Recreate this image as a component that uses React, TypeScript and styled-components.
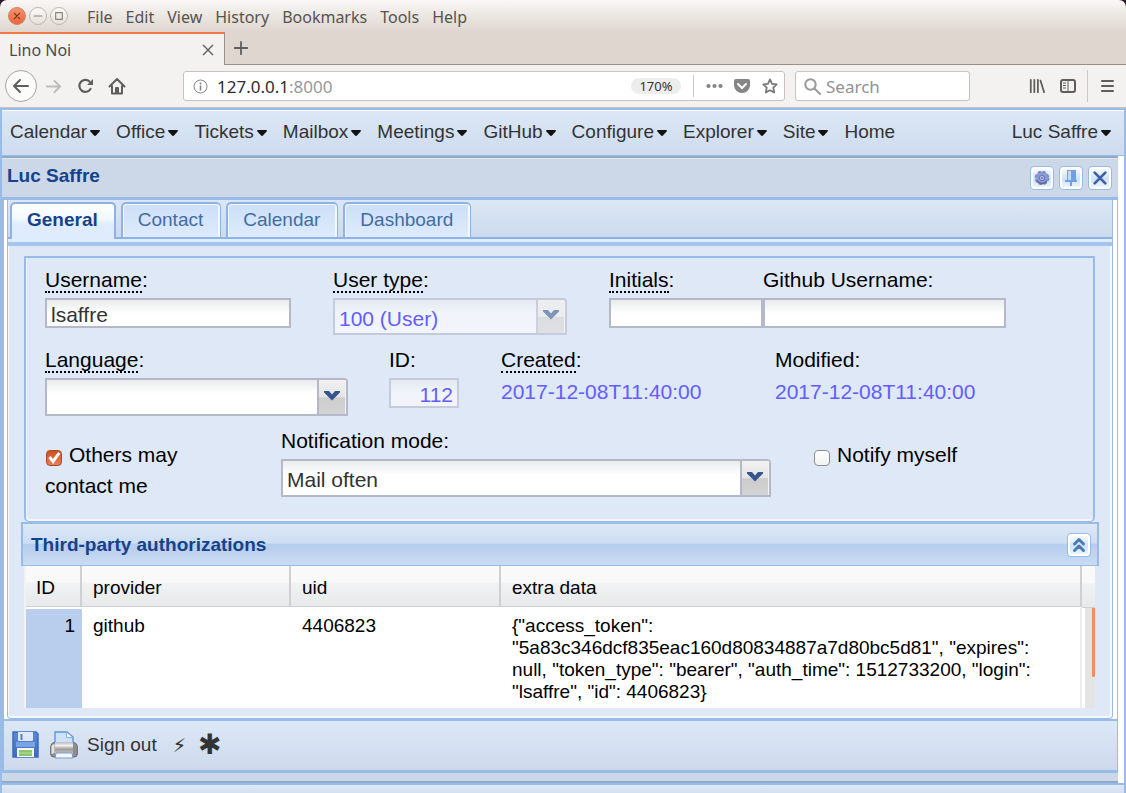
import React from "react";
import styled, { createGlobalStyle, css } from "styled-components";

const Global = createGlobalStyle`
  * { box-sizing: border-box; }
  html, body, #root { min-height: 100vh; }
  body { margin: 0; background: #fff; }
  #root { display: flex; flex-direction: column; }
  button, input, select { font: inherit; color: inherit; margin: 0; }
  button { background: none; border: 0; padding: 0; cursor: pointer; }
  svg { display: block; }
`;

const chromeFont = `"Noto Sans", "Open Sans", sans-serif`;
const appFont = `"Liberation Sans", Arial, sans-serif`;
const line = "#99bbe8";
const edge = "#b5b8c8";

/* ---------- browser window ---------- */

const Window = styled.div`
  flex: 1;
  display: flex;
  flex-direction: column;
  background: #2c1a2b;
`;

const TitleBar = styled.header`
  height: 32px;
  display: flex;
  align-items: center;
  padding: 0 8px;
  border-radius: 7px 7px 0 0;
  background: linear-gradient(#f9f7f5, #ded6cf);
  font: 16px ${chromeFont};
  color: #57534e;
`;

const WindowButtons = styled.div`
  display: flex;
  gap: 3px;
  margin-right: 19px;
`;

const WindowButton = styled.button<{ $close?: boolean }>`
  width: 18px;
  height: 18px;
  border-radius: 50%;
  display: grid;
  place-items: center;
  border: 1px solid ${(p) => (p.$close ? "#c98468" : "#bfb8b1")};
  background: ${(p) => (p.$close ? "linear-gradient(#f79272, #ec6537)" : "linear-gradient(#fbfaf9, #e6e0da)")};
`;

const MenuList = styled.nav`
  display: flex;
  gap: 13px;
  padding-top: 2px;
`;

const TabStrip = styled.div`
  height: 33px;
  display: flex;
  background: #dfd6d0;
`;

const BrowserTab = styled.div`
  width: 225px;
  display: flex;
  align-items: center;
  justify-content: space-between;
  padding: 0 10px 0 9px;
  border-top: 2px solid #f07746;
  border-right: 1px solid #98918b;
  background: #f4f2f1;
  font: 16px ${chromeFont};
  color: #4a4a4c;
`;

const TabRest = styled.div`
  flex: 1;
  display: flex;
  align-items: center;
  padding-left: 8px;
  border-bottom: 1px solid #98918b;
`;

const NavBar = styled.div`
  height: 43px;
  display: flex;
  align-items: center;
  padding: 0 12px 0 5px;
  background: #f4f2f1;
  border-bottom: 1px solid #c9c3be;
  font: 17px ${chromeFont};
`;

const BackButton = styled.button`
  width: 32px;
  height: 32px;
  border: 1px solid #a9a6a3;
  border-radius: 50%;
  background: #fcfcfb;
  display: grid;
  place-items: center;
`;

const NavIcon = styled.button<{ $gap: number }>`
  display: grid;
  place-items: center;
  margin-left: ${(p) => p.$gap}px;
`;

const AddressBox = styled.div`
  flex: 1;
  height: 30px;
  margin-left: 57px;
  padding: 0 6px 0 9px;
  display: flex;
  align-items: center;
  border: 1px solid #c5c2bf;
  border-radius: 3px;
  background: #fff;
`;

const Address = styled.div`
  flex: 1;
  padding-left: 9px;
  color: #2c2c2e;
  span { color: #98989a; }
`;

const Zoom = styled.button`
  height: 16px;
  width: 50px;
  border-radius: 8px;
  background: #ededed;
  font-size: 13px;
  line-height: 16px;
  color: #333;
  margin-right: 12px;
`;

const Divider = styled.span<{ $tall?: boolean }>`
  width: 1px;
  height: ${(p) => (p.$tall ? 32 : 22)}px;
  background: #cbc8c5;
`;

const SearchBox = styled.label`
  width: 175px;
  height: 30px;
  margin: 0 59px 0 10px;
  padding: 0 8px;
  display: flex;
  align-items: center;
  gap: 5px;
  border: 1px solid #c5c2bf;
  border-radius: 3px;
  background: #fff;
  svg { flex: none; }
  input {
    width: 100%;
    border: 0;
    padding: 0;
    outline: 0;
    background: none;
    &::placeholder { color: #929294; opacity: 1; }
  }
`;

/* ---------- application shell ---------- */

const Viewport = styled.div`
  flex: 1;
  display: flex;
  flex-direction: column;
  border: solid ${line};
  border-width: 2px 2px 0;
  background: #fff;
  font: 19px/22px ${appFont};
  color: #333;
`;

const AppMenu = styled.nav`
  height: 46px;
  display: flex;
  align-items: center;
  gap: 16px;
  padding: 0 13px 2px 8px;
  border-top: 1px solid #fff;
  border-bottom: 1px solid ${line};
  background: linear-gradient(#dbe7f5, #cedcee);
`;

const AppMenuItem = styled.button<{ $last?: boolean }>`
  display: flex;
  align-items: center;
  gap: 3px;
  white-space: nowrap;
  margin-left: ${(p) => (p.$last ? "auto" : "0")};
  svg { margin-top: 2px; }
`;

const Main = styled.main`
  flex: 1;
  margin-right: 6px;
  display: flex;
  flex-direction: column;
  border-top: 2px solid #93a9c8;
  background: #ccd7e7;
`;

const PanelHeader = styled.header`
  height: 40px;
  display: flex;
  align-items: center;
  gap: 5px;
  padding: 0 6px 0 5px;
  border-top: 1px solid #dfe6ee;
  border-bottom: 1px solid ${line};
`;

const PanelTitle = styled.h1`
  flex: 1;
  margin: 0 0 5px;
  font-size: 19px;
  line-height: 22px;
  color: #15428b;
`;

const Tool = styled.button`
  width: 24px;
  height: 24px;
  display: grid;
  place-items: center;
  border: 1px solid ${line};
  border-radius: 4px;
  background: linear-gradient(#fff, #cfe2fa 55%, #f2f9ff);
  box-shadow: inset 0 0 0 2px #fff;
`;

const PanelFrame = styled.section`
  flex: 1;
  display: flex;
  flex-direction: column;
  border: 2px solid ${line};
  border-width: 2px 1px 0 2px;
  background: #fff;
`;

const TabPanelBox = styled.div`
  flex: 1;
  margin: 0 4px 0 3px;
  display: flex;
  flex-direction: column;
  border: 1px solid ${line};
  border-top: 0;
  border-radius: 0 0 4px 4px;
  background: #dfe8f6;
`;

const Tabs = styled.div`
  height: 39px;
  display: flex;
  align-items: flex-end;
  gap: 5px;
  padding-left: 2px;
  border-bottom: 2px solid #8db2e3;
  background: linear-gradient(#dce7f5, #cbdaed);
`;

const Tab = styled.button<{ $active?: boolean }>`
  height: 35px;
  padding: 0 17px 2px 15px;
  border: 1px solid #8db2e3;
  border-width: 2px 1px 0 2px;
  border-radius: 5px 5px 0 0;
  color: #416da3;
  background: linear-gradient(#ccdff8, #deebfd);
  box-shadow: inset 1px 1px 0 #f3f8fe, inset -2px 0 0 #f3f8fe;
  ${(p) =>
    p.$active &&
    css`
      height: 37px;
      margin-bottom: -2px;
      padding-right: 16px;
      padding-bottom: 4px;
      border-right-width: 2px;
      font-weight: bold;
      color: #15428b;
      background: linear-gradient(#fff, #f3f9ff 40%, #deecfd 60%);
      box-shadow: none;
    `}
`;

const TabGap = styled.div`
  height: 7px;
  border-bottom: 4px solid #a6c4ec;
  background: #deecfd;
`;

const TabBody = styled.div`
  flex: 1;
  padding: 10px 11px 8px 12px;
  border: solid #f5f9fe;
  border-width: 0 2px 2px 1px;
  border-radius: 0 0 4px 4px;
`;

/* ---------- form ---------- */

const FormPanel = styled.form`
  height: 266px;
  margin: 0 4px 0 3px;
  padding: 10px 18px 0 19px;
  display: flex;
  flex-direction: column;
  border: 2px solid ${line};
  border-bottom-width: 1px;
  border-radius: 1px 1px 5px 5px;
  box-shadow: inset 1px -2px 0 #f2f6fc;
  font-size: 21px;
  line-height: 24px;
  color: #000;
`;

const FormRow = styled.div<{ $cols: string; $height: number }>`
  display: grid;
  grid-template-columns: ${(p) => p.$cols};
  height: ${(p) => p.$height}px;
`;

const Field = styled.div<{ $after?: number }>`
  min-width: 0;
  padding-right: ${(p) => p.$after ?? 0}px;
`;

const Label = styled.label<{ $hint?: boolean }>`
  display: block;
  height: 30px;
  white-space: nowrap;
  span { ${(p) => p.$hint && "display: inline-block; height: 25px; border-bottom: 2px dotted #000;"} }
`;

const fieldFill = "linear-gradient(#e9eded, #fff 14px)";

const TextInput = styled.input`
  display: block;
  width: 100%;
  height: 30px;
  padding: 4px 4px 0;
  border: 2px solid ${edge};
  border-radius: 0;
  background: ${fieldFill};
  color: #333;
  outline: 0;
  &:read-only {
    width: 70px;
    text-align: right;
    color: #635cff;
    border-color: #c5cbdd;
    background: linear-gradient(#e5eaf1, #f1f5fb 14px);
  }
`;

const Combo = styled.div<{ $short?: boolean }>`
  position: relative;
  height: ${(p) => (p.$short ? 37 : 38)}px;
  select {
    width: 100%;
    height: 100%;
    padding: 4px 34px 0 4px;
    appearance: none;
    border: 2px solid ${edge};
    border-radius: 0 4px 0 0;
    background: ${fieldFill};
    color: #333;
    outline: 0;
    &:disabled {
      opacity: 1;
      color: #635cff;
      border-color: #c5cbdd;
      background: linear-gradient(#e5eaf1, #f1f5fb 14px);
    }
  }
`;

const Trigger = styled.span`
  position: absolute;
  inset: 2px 2px 2px auto;
  width: 29px;
  display: grid;
  place-items: center;
  padding: 0 2px 3px 0;
  border-left: 2px solid ${edge};
  background: linear-gradient(#f1f1f1, #e4e4e4 50%, #cdcdcd 52%, #d3d3d3);
  box-shadow: inset -1px 0 0 #f4f4f4;
  pointer-events: none;
  select:disabled + & { opacity: 0.6; }
`;

const Value = styled.output`
  display: block;
  margin-top: 2px;
  color: #635cff;
`;

const CheckLabel = styled.label`
  display: block;
  width: 170px;
  margin-top: 10px;
  line-height: 31px;
`;

const Check = styled.input`
  appearance: none;
  width: 16px;
  height: 16px;
  margin: 0 7px 0 1px;
  vertical-align: -4px;
  border: 1px solid #8e8e8c;
  border-radius: 4px;
  background: linear-gradient(#fff, #f2f2f2);
  &:checked {
    border-color: #a8492a;
    background: linear-gradient(#cf4f22, #e8805a);
  }
  &:checked::after {
    content: "";
    display: block;
    height: 14px;
    background: #fff;
    clip-path: polygon(10% 50%, 26% 36%, 42% 58%, 80% 8%, 96% 20%, 44% 92%);
  }
`;

/* ---------- grid ---------- */

const GridHeader = styled.header`
  height: 44px;
  display: flex;
  align-items: center;
  justify-content: space-between;
  padding: 0 6px 0 8px;
  border: 2px solid ${line};
  border-bottom-width: 1px;
  background: linear-gradient(#dce8f6, #cddef3 47%, #b4ccec 49%, #cbdcf3);
  h2 { margin: 0; font-size: 19px; line-height: 22px; color: #15428b; }
`;

const GridBox = styled.div`
  height: 142px;
  margin: 0 4px 0 3px;
  display: flex;
  background: #fff;
  color: #000;
`;

const Table = styled.table`
  flex: 1;
  table-layout: fixed;
  border-collapse: separate;
  border-spacing: 0;
  border-left: 2px solid #f2f2f2;
  th, td { padding: 0 8px 0 11px; text-align: left; vertical-align: top; font-weight: normal; }
  th {
    height: 41px;
    vertical-align: middle;
    padding-top: 4px;
    border-right: 2px solid #d0d0d0;
    border-bottom: 1px solid #d0d0d0;
    background: linear-gradient(#f9f9f9 40%, #f1f2f3 44%, #e8e9eb);
  }
  th:first-child { padding-left: 10px; }
  td { height: 101px; padding-top: 6px; border-top: 2px solid #fff; }
  td:first-child { text-align: right; padding-right: 7px; background: #b8ceec; }
  td:last-child { padding-right: 24px; border-right: 2px solid #ededed; }
`;

const ScrollColumn = styled.div`
  width: 13px;
  display: flex;
  flex-direction: column;
  &::before {
    content: "";
    height: 41px;
    border-bottom: 1px solid #d0d0d0;
    background: linear-gradient(#f9f9f9 40%, #f1f2f3 44%, #e8e9eb);
  }
`;

const ScrollTrack = styled.div`
  flex: 1;
  margin-left: 3px;
  background: #e4e4e4;
`;

const ScrollThumb = styled.div`
  height: 69px;
  width: 3px;
  margin-left: auto;
  background: #f08c66;
  border-radius: 0 0 1px 1px;
`;

/* ---------- bottom ---------- */

const BottomBar = styled.div`
  height: 54px;
  display: flex;
  align-items: center;
  padding: 0 8px 2px;
  border-top: 2px solid ${line};
  border-bottom: 3px solid ${line};
  background: linear-gradient(#dce8f6, #cddaec);
`;

const BarButton = styled.button<{ $gap?: number }>`
  display: flex;
  align-items: center;
  margin-left: ${(p) => p.$gap ?? 0}px;
`;

const Symbol = styled.span<{ $size: number }>`
  font: ${(p) => p.$size}px/30px "DejaVu Sans", sans-serif;
  color: #333;
`;

const Splitter = styled.div`
  height: 10px;
  border-bottom: 2px solid #8fa8cc;
  background: #cdd8e6;
`;

const StatusBar = styled.footer`
  height: 10px;
  border-top: 2px solid ${line};
  background: linear-gradient(#dfe9f6, #d3e0f1);
`;

/* ---------- icons ---------- */

const Stroke = ({ d, size = 18, color = "#5f5e5e", w = 2 }: { d: string; size?: number; color?: string; w?: number }) => (
  <svg width={size} height={size} viewBox="0 0 18 18" fill="none" stroke={color} strokeWidth={w} strokeLinecap="round" strokeLinejoin="round">
    <path d={d} />
  </svg>
);

const Caret = () => (
  <svg width="10" height="6" viewBox="0 0 10 6"><path d="M0 1Q0 0 1 0h8q1 0 1 1L6 5.5Q5 6.3 4 5.5Z" fill="#111" /></svg>
);

const Chevron = () => (
  <svg width="16" height="10" viewBox="0 0 16 10"><path d="M0 0h5l3 3.500 3-3.500h5v1.500L8 9.500 0 1.500Z" fill="#36558f" /></svg>
);

const Gear = () => (
  <svg width="16" height="16" viewBox="0 0 18 18">
    <circle cx="9" cy="9" r="7.2" fill="#8493cb" stroke="#7384bd" strokeWidth="2" strokeDasharray="3.4 2.255" />
    <circle cx="9" cy="9" r="6.6" fill="#8d9bd0" />
    <path d="M3.500 12a6.300 6.300 0 0 0 11 0" fill="none" stroke="#5a6a9e" strokeWidth="1.600" />
    <circle cx="9" cy="9" r="2.800" fill="#bcc6ec" stroke="#6676b5" strokeWidth="1.200" />
    <circle cx="9" cy="9" r="1" fill="#6676b5" />
  </svg>
);

const Pin = () => (
  <svg width="18" height="18" viewBox="0 0 18 18">
    <path d="M5 1h9v10h1v2h-5v4H8v-4H3v-2h2Z" fill="#6ea0e2" />
    <path d="M6 2h3v9H6Z" fill="#c4dcfa" />
  </svg>
);

const Floppy = () => (
  <svg width="27" height="27" viewBox="0 0 27 27">
    <defs><linearGradient id="fl" x2="0" y2="1"><stop stopColor="#5a8bd8" /><stop offset="1" stopColor="#3c6cbc" /></linearGradient></defs>
    <path d="M1 1h23l2 2v23H1Z" fill="url(#fl)" stroke="#3c6dbd" strokeWidth="1.500" />
    <path d="M4 11h19v5H4Z" fill="#7ba4e6" />
    <path d="M6 1h15v8q0 1-1 1H7q-1 0-1-1Z" fill="#dfe8f7" />
    <path d="M8.500 3h2v6h-2Z" fill="#5f80b9" />
    <path d="M5 17h17v9H5Z" fill="#f4f8f1" />
    <path d="M7 19h13v6H7Z" fill="#8cc56c" /><path d="M7 22h13" stroke="#b3dc9a" />
  </svg>
);

const Printer = () => (
  <svg width="28" height="28" viewBox="0 0 28 28">
    <defs><linearGradient id="pr" x2="0" y2="1"><stop stopColor="#b9b9bb" /><stop offset=".3" stopColor="#f1f1f1" /><stop offset=".6" stopColor="#9b9b9d" /><stop offset="1" stopColor="#c9c9cb" /></linearGradient></defs>
    <path d="M0.700 16q0-4 4-5h18q4.600 1 4.600 5v7q0 3-3 3H4q-3.300 0-3.300-3Z" fill="#8f8f91" stroke="#69696b" />
    <path d="M5 12V1h12l6 5v6Z" fill="#cde1f9" stroke="#5c96da" strokeWidth="1.400" />
    <path d="M16.500 1.500v5h6" fill="#f3f8fe" stroke="#7fb0e8" />
    <path d="M5 11h18v12H5Z" fill="url(#pr)" />
    <path d="M1.500 15q1-2 3-2v9l-3 1Z" fill="#e4e4e5" />
    <path d="M6 22h16l1 5H5Z" fill="#f2f6fb" stroke="#7c9cc6" />
  </svg>
);

/* ---------- page ---------- */

const browserMenu = ["File", "Edit", "View", "History", "Bookmarks", "Tools", "Help"];
const appMenu = ["Calendar", "Office", "Tickets", "Mailbox", "Meetings", "GitHub", "Configure", "Explorer", "Site"];
const tabs = ["General", "Contact", "Calendar", "Dashboard"];

export default function App() {
  return (
    <Window>
      <Global />
      <TitleBar>
        <WindowButtons>
          <WindowButton $close aria-label="Close window"><Stroke size={10} color="#6b3320" w={2} d="M4 4l10 10M14 4L4 14" /></WindowButton>
          <WindowButton aria-label="Minimize"><Stroke size={10} color="#85807b" w={2} d="M2 9h14" /></WindowButton>
          <WindowButton aria-label="Maximize"><Stroke size={10} color="#85807b" w={2} d="M3 3h12v12H3Z" /></WindowButton>
        </WindowButtons>
        <MenuList>{browserMenu.map((m) => <button key={m}>{m}</button>)}</MenuList>
      </TitleBar>
      <TabStrip>
        <BrowserTab>Lino Noi<button aria-label="Close tab"><Stroke size={12} w={2} d="M2 2l14 14M16 2L2 16" /></button></BrowserTab>
        <TabRest><button aria-label="New tab"><Stroke size={16} w={2} d="M9 2v14M2 9h14" /></button></TabRest>
      </TabStrip>
      <NavBar>
        <BackButton aria-label="Back"><Stroke w={2} d="M16 9H3M8 3L2 9L8 15" /></BackButton>
        <NavIcon $gap={8} aria-label="Forward"><Stroke size={17} color="#bdbbb9" w={2} d="M2 9H15M10 3L16 9L10 15" /></NavIcon>
        <NavIcon $gap={15} aria-label="Reload">
          <svg width="17" height="16" viewBox="0 0 17 16"><path d="M13.500 11a6 6 0 1 1-1-7.500" fill="none" stroke="#5f5e5e" strokeWidth="2.200" strokeLinecap="round" /><path d="M16 1v6h-6Z" fill="#5f5e5e" /></svg>
        </NavIcon>
        <NavIcon $gap={14} aria-label="Home">
          <svg width="18" height="18" viewBox="0 0 18 18" fill="none" stroke="#5f5e5e" strokeWidth="2" strokeLinejoin="round" strokeLinecap="round">
            <path d="M1.500 9.500L9 2l7.500 7.500M4 9v7.500h10V9" /><path d="M8 16v-5h2v5" />
          </svg>
        </NavIcon>
        <AddressBox>
          <svg width="15" height="15" viewBox="0 0 15 15" fill="none" stroke="#858585"><circle cx="7.500" cy="7.500" r="6.500" /><path d="M7.500 6.500v5M7.500 3.500v2" strokeWidth="1.600" /></svg>
          <Address>127.0.0.1<span>:8000</span></Address>
          <Zoom>170%</Zoom>
          <Divider />
          <NavIcon $gap={12} aria-label="Page actions"><svg width="17" height="18" viewBox="0 0 17 18" fill="#858585"><circle cx="2.500" cy="9" r="2.100" /><circle cx="8.500" cy="9" r="2.100" /><circle cx="14.500" cy="9" r="2.100" /></svg></NavIcon>
          <NavIcon $gap={11} aria-label="Save to Pocket">
            <svg width="16" height="16" viewBox="0 0 16 16"><path d="M2 1h12q2 0 2 2v4.500a8 7.500 0 0 1-16 0V3q0-2 2-2Z" fill="#858585" /><path d="M4 6l4 4 4-4" fill="none" stroke="#fff" strokeWidth="2" strokeLinecap="round" /></svg>
          </NavIcon>
          <NavIcon $gap={12} aria-label="Bookmark"><Stroke size={16} color="#777" d="M9 1.500l2.300 5 5.200.7-3.800 3.700 1 5.400L9 13.700l-4.700 2.600 1-5.400L1.500 7.200l5.200-.7Z" /></NavIcon>
        </AddressBox>
        <SearchBox>
          <svg width="17" height="17" viewBox="0 0 17 17" fill="none" stroke="#9a9a9a" strokeWidth="2" strokeLinecap="round"><circle cx="6.500" cy="6.500" r="5.200" /><path d="M10.500 10.500L16 16" /></svg>
          <input placeholder="Search" aria-label="Search" />
        </SearchBox>
        <NavIcon $gap={0} aria-label="Library"><Stroke size={16} d="M2 2v14M6 2v14M10 2v14M13 3L17 16" /></NavIcon>
        <NavIcon $gap={15} aria-label="Sidebar">
          <svg width="16" height="14" viewBox="0 0 16 14" fill="none" stroke="#5f5e5e" strokeWidth="2"><rect x="1" y="1" width="14" height="12" rx="2" /><path d="M8 1v12" strokeWidth="1" /><path d="M3 4h3M3 6.500h3M3 9h3" strokeWidth="1" /></svg>
        </NavIcon>
        <NavIcon as="span" $gap={11}><Divider $tall /></NavIcon>
        <NavIcon $gap={13} aria-label="Menu"><svg width="13" height="14" viewBox="0 0 13 14"><path d="M1 2h11M1 7h11M1 12h11" stroke="#5f5e5e" strokeWidth="2" strokeLinecap="round" /></svg></NavIcon>
      </NavBar>

      <Viewport>
        <AppMenu>
          {appMenu.map((m) => <AppMenuItem key={m}>{m}<Caret /></AppMenuItem>)}
          <AppMenuItem>Home</AppMenuItem>
          <AppMenuItem $last>Luc Saffre<Caret /></AppMenuItem>
        </AppMenu>
        <Main>
          <PanelHeader>
            <PanelTitle>Luc Saffre</PanelTitle>
            <Tool aria-label="Settings"><Gear /></Tool>
            <Tool aria-label="Pin"><Pin /></Tool>
            <Tool aria-label="Close"><Stroke size={16} color="#3f5fa6" w={3} d="M3 3l12 12M15 3L3 15" /></Tool>
          </PanelHeader>
          <PanelFrame>
            <TabPanelBox>
              <Tabs role="tablist">
                {tabs.map((t, i) => <Tab key={t} role="tab" aria-selected={i === 0} $active={i === 0}>{t}</Tab>)}
              </Tabs>
              <TabGap />
              <TabBody>
                <FormPanel onSubmit={(e) => e.preventDefault()}>
                  <FormRow $cols="288fr 276fr 154fr 243fr 69fr" $height={80}>
                    <Field $after={42}>
                      <Label htmlFor="username" $hint><span>Username</span>:</Label>
                      <TextInput id="username" defaultValue="lsaffre" />
                    </Field>
                    <Field $after={42}>
                      <Label htmlFor="usertype" $hint><span>User type</span>:</Label>
                      <Combo $short><select id="usertype" disabled><option>100 (User)</option></select><Trigger><Chevron /></Trigger></Combo>
                    </Field>
                    <Field>
                      <Label htmlFor="initials" $hint><span>Initials</span>:</Label>
                      <TextInput id="initials" />
                    </Field>
                    <Field>
                      <Label htmlFor="github">Github Username:</Label>
                      <TextInput id="github" />
                    </Field>
                  </FormRow>
                  <FormRow $cols="344fr 112fr 274fr 300fr" $height={81}>
                    <Field $after={41}>
                      <Label htmlFor="language" $hint><span>Language</span>:</Label>
                      <Combo><select id="language"><option></option></select><Trigger><Chevron /></Trigger></Combo>
                    </Field>
                    <Field>
                      <Label htmlFor="id">ID:</Label>
                      <TextInput id="id" readOnly value="112" />
                    </Field>
                    <Field>
                      <Label htmlFor="created" $hint><span>Created</span>:</Label>
                      <Value id="created">2017-12-08T11:40:00</Value>
                    </Field>
                    <Field>
                      <Label htmlFor="modified">Modified:</Label>
                      <Value id="modified">2017-12-08T11:40:00</Value>
                    </Field>
                  </FormRow>
                  <FormRow $cols="236fr 532fr 262fr" $height={81}>
                    <Field><CheckLabel><Check type="checkbox" defaultChecked />Others may contact me</CheckLabel></Field>
                    <Field $after={42}>
                      <Label htmlFor="mode">Notification mode:</Label>
                      <Combo><select id="mode"><option>Mail often</option></select><Trigger><Chevron /></Trigger></Combo>
                    </Field>
                    <Field><CheckLabel><Check type="checkbox" />Notify myself</CheckLabel></Field>
                  </FormRow>
                </FormPanel>
                <GridHeader>
                  <h2>Third-party authorizations</h2>
                  <Tool aria-label="Collapse"><Stroke size={18} color="#4c7cb8" w={3} d="M4.500 8l4.500-4.500 4.500 4.500M4.500 14.500l4.500-4.500 4.500 4.500" /></Tool>
                </GridHeader>
                <GridBox>
                  <Table>
                    <colgroup><col style={{ width: 56 }} /><col style={{ width: 209 }} /><col style={{ width: 210 }} /><col /></colgroup>
                    <thead><tr><th>ID</th><th>provider</th><th>uid</th><th>extra data</th></tr></thead>
                    <tbody>
                      <tr>
                        <td>1</td><td>github</td><td>4406823</td>
                        <td>{'{"access_token": "5a83c346dcf835eac160d80834887a7d80bc5d81", "expires": null, "token_type": "bearer", "auth_time": 1512733200, "login": "lsaffre", "id": 4406823}'}</td>
                      </tr>
                    </tbody>
                  </Table>
                  <ScrollColumn><ScrollTrack><ScrollThumb /></ScrollTrack></ScrollColumn>
                </GridBox>
              </TabBody>
            </TabPanelBox>
            <BottomBar>
              <BarButton aria-label="Save"><Floppy /></BarButton>
              <BarButton $gap={11} aria-label="Print"><Printer /></BarButton>
              <BarButton $gap={9}>Sign out</BarButton>
              <BarButton $gap={16} aria-label="Quick action"><Symbol $size={19}>⚡</Symbol></BarButton>
              <BarButton $gap={12} aria-label="Parameters"><Symbol $size={28}>✱</Symbol></BarButton>
            </BottomBar>
          </PanelFrame>
          <Splitter />
        </Main>
        <StatusBar />
      </Viewport>
    </Window>
  );
}
